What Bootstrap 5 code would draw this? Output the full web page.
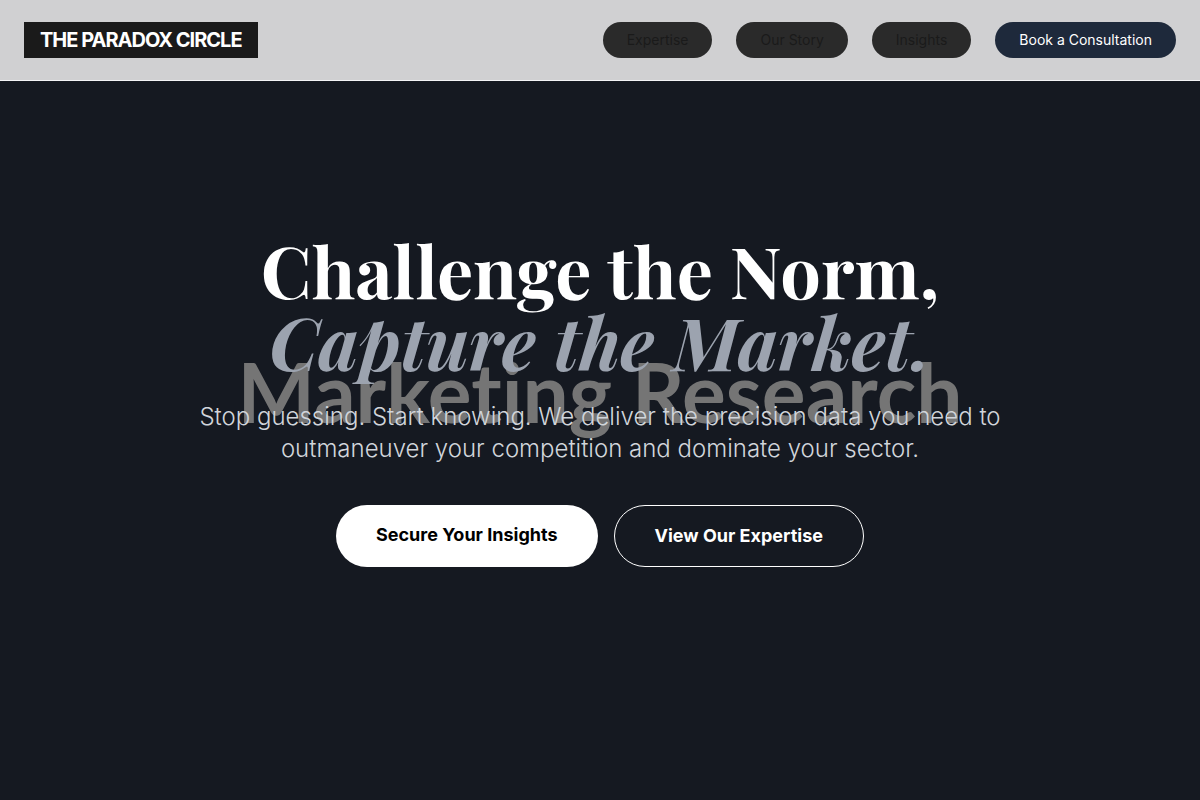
<!DOCTYPE html>
<html lang="en">
<head>
<meta charset="utf-8">
<meta name="viewport" content="width=device-width, initial-scale=1">
<title>The Paradox Circle</title>
<link href="https://cdn.jsdelivr.net/npm/bootstrap@5.3.0/dist/css/bootstrap.min.css" rel="stylesheet">
<style>
body { font-family: Inter, "Liberation Sans", sans-serif; background: #151921; }
.site-header { background: #d0d0d2; border-bottom: 1px solid #f3f4f6; padding: 22px 24px; }
.brand { background: #1a1a1a; color: #fff; font-size: 20px; line-height: 28px; font-weight: 700; letter-spacing: -1px; padding: 4px 16px; }
.pill { font-size: 14px; line-height: 20px; padding: 8px 24px; border-radius: 999px; background: #2a2a2a; color: #1a1a1a; text-decoration: none; }
.pill-primary { background: #1e293b; color: #fff; }
.hero { background: #151921; color: #fff; }
.hero-title { font-family: "Playfair Display", "Liberation Serif", serif; font-size: 72px; line-height: 72px; font-weight: 700; margin-bottom: 24px; }
.hero-title em { color: #9ca3af; }
.watermark { color: #757575; font-family: Lato, sans-serif; font-size: 82px; line-height: 96px; font-weight: 700; font-variant-ligatures: none; padding-bottom: 18px; }
.hero-copy { max-width: 896px; }
.lede { font-size: 24px; line-height: 32px; font-weight: 300; color: #d1d5db; max-width: 830px; margin-bottom: 40px; }
.cta { font-size: 18px; line-height: 28px; font-weight: 700; padding: 16px 40px; border-radius: 999px; text-decoration: none; color: #fff; }
.cta-solid { background: #fff; color: #000; }
.cta-outline { border: 1px solid #fff; }
</style>
</head>
<body>
<header class="site-header fixed-top d-flex flex-wrap gap-3 align-items-center justify-content-between">
  <a class="brand text-decoration-none" href="#">THE PARADOX CIRCLE</a>
  <nav class="d-flex flex-wrap gap-4" aria-label="Main">
    <a class="pill" href="#">Expertise</a>
    <a class="pill" href="#">Our Story</a>
    <a class="pill" href="#">Insights</a>
    <a class="pill pill-primary" href="#">Book a Consultation</a>
  </nav>
</header>
<main class="hero position-relative min-vh-100 d-flex align-items-center justify-content-center text-center">
  <div class="watermark position-absolute top-0 start-0 w-100 h-100 d-flex align-items-center justify-content-center">Marketing Research</div>
  <div class="hero-copy position-relative">
    <h1 class="hero-title">Challenge the Norm,<br><em>Capture the Market.</em></h1>
    <p class="lede mx-auto">Stop guessing. Start knowing. We deliver the precision data you need to outmaneuver your competition and dominate your sector.</p>
    <div class="d-flex flex-wrap justify-content-center gap-3">
      <a class="cta cta-solid" href="#">Secure Your Insights</a>
      <a class="cta cta-outline" href="#">View Our Expertise</a>
    </div>
  </div>
</main>
<script src="https://cdn.jsdelivr.net/npm/bootstrap@5.3.0/dist/js/bootstrap.bundle.min.js"></script>
</body>
</html>
